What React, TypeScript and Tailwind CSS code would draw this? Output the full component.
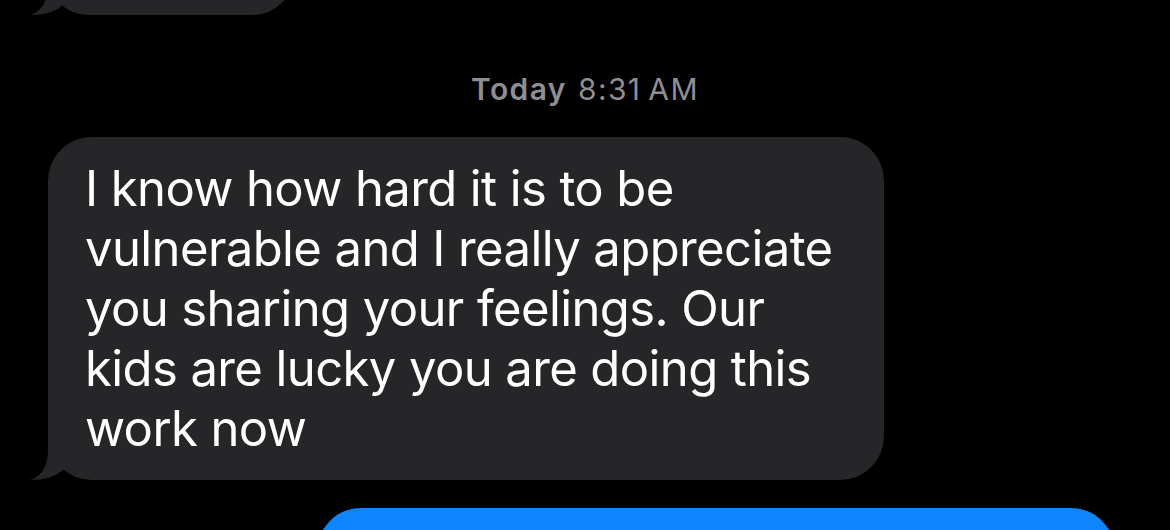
function Tail({ color }: { color: string }) {
  // iMessage style tail, hangs off the bottom-left corner of a bubble
  return (
    <svg
      className="absolute left-[-18px] bottom-0"
      width="70"
      height="44"
      viewBox="0 0 70 44"
      fill={color}
    >
      <path d="M18 0 L18 14 C18 30 12 40 0 44 C14 44 26 41 35 32 C44 40 54 44 70 44 L70 0 Z" />
    </svg>
  );
}

function Received({ children, className }: { children: React.ReactNode; className?: string }) {
  return (
    <div className={"relative self-start ml-[48px] " + (className ?? "")}>
      <Tail color="#262629" />
      <div className="relative bg-[#262629] rounded-[44px] text-white">{children}</div>
    </div>
  );
}

export default function App() {
  const font = { fontFamily: "Inter, 'Noto Sans', 'Liberation Sans', sans-serif" };
  return (
    <div className="w-[1170px] h-[530px] bg-black overflow-hidden flex flex-col" style={font}>
      <Received className="mt-[-65px]">
        <div className="w-[245px] h-[80px]" />
      </Received>

      <div className="mt-[58px] h-[32px] flex items-center justify-center text-[30px] text-[#8e8e93] tracking-[1.4px]">
        <span className="font-semibold">Today</span>
        <span className="ml-[11px]">8:31&#8239;AM</span>
      </div>

      <Received className="mt-[32px]">
        <div className="w-[836px] pl-[37px] pr-[20px] pt-[22px] pb-[21px] text-[49px] leading-[60px] tracking-[-0.6px] whitespace-nowrap">
          I know how hard it is to be
          <br />
          vulnerable and I really appreciate
          <br />
          you sharing your feelings. Our
          <br />
          kids are lucky you are doing this
          <br />
          work now
        </div>
      </Received>

      <div className="mt-[28px] self-end mr-[55px] w-[798px] h-[120px] shrink-0 bg-[#0f86fe] rounded-[44px]" />
    </div>
  );
}
